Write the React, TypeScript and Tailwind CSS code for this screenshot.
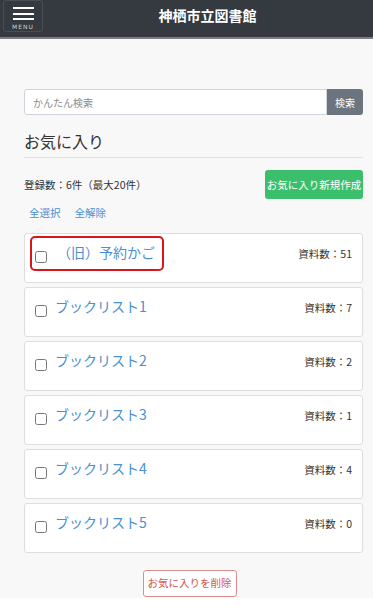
import React from "react";

const lists = [
  { name: "（旧）予約かご", count: 51 },
  { name: "ブックリスト1", count: 7 },
  { name: "ブックリスト2", count: 2 },
  { name: "ブックリスト3", count: 1 },
  { name: "ブックリスト4", count: 4 },
  { name: "ブックリスト5", count: 0 },
];

export default function App() {
  return (
    <div
      className="w-[373px] bg-white"
      style={{ fontFamily: '"Noto Sans CJK JP", "Noto Sans", sans-serif' }}
    >
      <header className="relative h-[39px] bg-[#343a40] border-b-2 border-[#7b7f83] flex items-center justify-center">
        <div className="absolute left-[3px] top-0 w-[40px] h-[32px] border border-[#4a4f55] rounded-[3px] flex flex-col items-center pt-[6px]">
          <div className="w-[21px] h-[2px] bg-white mb-[4px]" />
          <div className="w-[21px] h-[2px] bg-white mb-[3px]" />
          <div className="w-[21px] h-[2px] bg-white" />
          <div className="text-[6px] leading-none text-[#cfd2d5] mt-[4px] tracking-[1px]" style={{ fontFamily: '"DejaVu Sans", sans-serif' }}>MENU</div>
        </div>
        <h1 className="text-white text-[14px] font-bold leading-none -mt-[8px] ml-[42px]">神栖市立図書館</h1>
      </header>

      <main className="bg-[#f8f8f8] pl-[24px] pr-[10px] pt-[50px] pb-[1px]">
        <div className="flex h-[26px]">
          <input
            className="flex-1 h-full border border-[#ced4da] rounded-l-[3px] bg-white px-[8px] text-[10px] text-[#333] outline-none placeholder:text-[#8a8a8a]"
            placeholder="かんたん検索"
          />
          <button className="w-[36px] h-full bg-[#6c757d] text-white text-[10px] rounded-r-[3px]">検索</button>
        </div>

        <h2 className="text-[16px] text-[#333] leading-none mt-[18px] pb-[8px] border-b border-[#e3e3e3]">お気に入り</h2>

        <div className="flex items-center justify-between mt-[12px]">
          <span className="text-[10.5px] text-[#333]">登録数：6件（最大20件）</span>
          <button className="h-[29px] w-[98px] bg-[#3cbf6c] text-white text-[10.5px] rounded-[3px]">お気に入り新規作成</button>
        </div>

        <div className="flex gap-[14px] pl-[5px] mt-[6px] text-[10.5px] text-[#4a8fd1]">
          <span>全選択</span>
          <span>全解除</span>
        </div>

        <div className="flex flex-col gap-[4px] mt-[12px]">
          {lists.map((l, i) => (
            <div key={i} className="relative h-[50px] bg-white border border-[#dedede] rounded-[3px] flex items-start pl-[10px] pr-[10px]">
              <input type="checkbox" className="w-[12px] h-[12px] mt-[17px] accent-[#777]" />
              <span className={`text-[14px] text-[#4a8fd1] leading-none mt-[11px] ${i === 0 ? "ml-[10px]" : "ml-[8px]"}`}>{l.name}</span>
              <span className="ml-auto text-[10.5px] text-[#333] mt-[12px]">資料数：{l.count}</span>
              {i === 0 && (
                <div className="absolute left-[5px] top-[2px] w-[134px] h-[35px] border-2 border-[#d9161c] rounded-[5px]" />
              )}
            </div>
          ))}
        </div>

        <div className="flex justify-center mt-[17px] pr-[8px]">
          <button className="h-[27px] w-[94px] border border-[#dc8e8e] rounded-[3px] bg-white text-[#d9534f] text-[10.5px]">お気に入りを削除</button>
        </div>
      </main>
      <div className="h-[10px] bg-white" />
    </div>
  );
}
